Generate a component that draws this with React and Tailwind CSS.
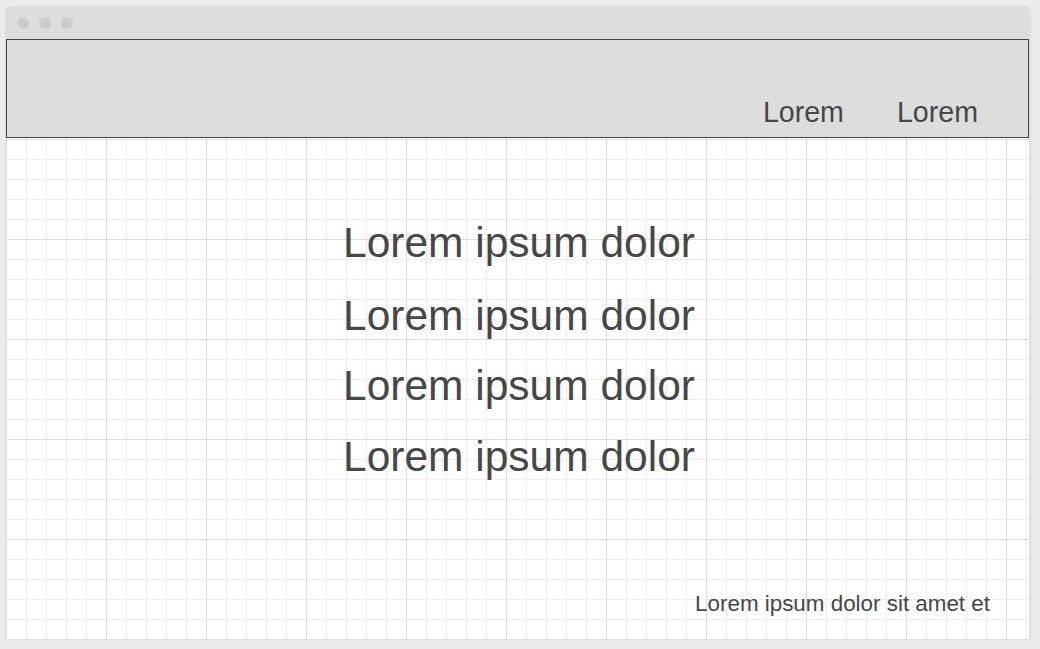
export default function App() {
  const font = { fontFamily: '"Liberation Sans", Arial, sans-serif' };
  return (
    <div className="w-[1040px] h-[649px] bg-[#ebebeb] pt-[6px] pl-[5px] overflow-hidden" style={font}>
      <div className="w-[1025px] h-[633px] bg-[#dddddd] rounded-t-[6px] flex flex-col shadow-[1px_1px_2px_rgba(0,0,0,0.06)]">
        <div className="h-[33px] shrink-0 flex items-center gap-[10px] pl-[12px]">
          <span className="w-[12px] h-[12px] rounded-full bg-[#cbcbcb]" />
          <span className="w-[12px] h-[12px] rounded-full bg-[#cbcbcb]" />
          <span className="w-[12px] h-[12px] rounded-full bg-[#cbcbcb]" />
        </div>
        <div className="mx-[1px] h-[99px] shrink-0 border border-[#444444] bg-[#dddddd] flex items-end justify-end gap-[53px] pr-[50px] pb-[9px]">
          <span className="text-[28.6px] leading-[32px] text-[#474747]">Lorem</span>
          <span className="text-[28.6px] leading-[32px] text-[#474747]">Lorem</span>
        </div>
        <div className="mx-[1px] flex-1 relative bg-white bg-[linear-gradient(to_right,#dddddd_1px,transparent_1px),linear-gradient(to_bottom,#dddddd_1px,transparent_1px),linear-gradient(to_right,#eeeeee_1px,transparent_1px),linear-gradient(to_bottom,#eeeeee_1px,transparent_1px)] bg-[size:100px_100px,100px_100px,20px_20px,20px_20px] bg-[position:0_1px] flex flex-col">
          <div className="flex flex-col items-center pt-[81px] pl-[3px] text-[42.5px] leading-[48px] text-[#474747]">
            <div>Lorem ipsum dolor</div>
            <div className="mt-[25px]">Lorem ipsum dolor</div>
            <div className="mt-[22px]">Lorem ipsum dolor</div>
            <div className="mt-[23px]">Lorem ipsum dolor</div>
          </div>
          <div className="mt-auto flex justify-end pr-[39px] pb-[22px]">
            <span className="text-[22.4px] leading-[26px] text-[#474747]">Lorem ipsum dolor sit amet et</span>
          </div>
        </div>
      </div>
    </div>
  );
}
